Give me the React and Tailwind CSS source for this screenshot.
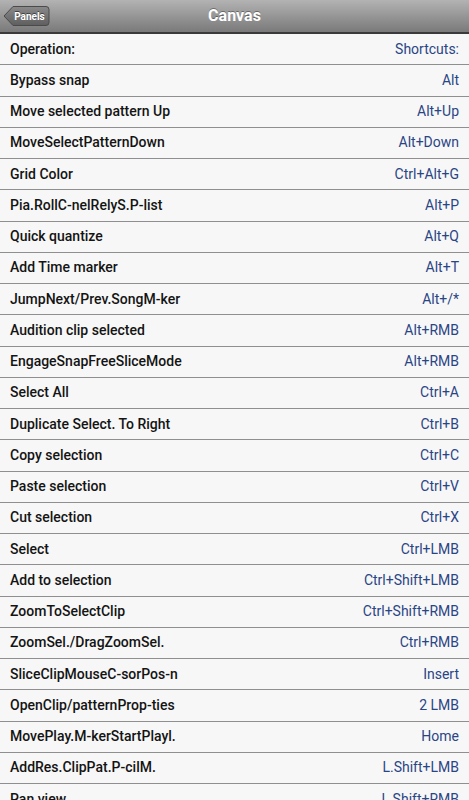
import React from 'react';

const rows = [
  ['Operation:', 'Shortcuts:'],
  ['Bypass snap', 'Alt'],
  ['Move selected pattern Up', 'Alt+Up'],
  ['MoveSelectPatternDown', 'Alt+Down'],
  ['Grid Color', 'Ctrl+Alt+G'],
  ['Pia.RollC-nelRelyS.P-list', 'Alt+P'],
  ['Quick quantize', 'Alt+Q'],
  ['Add Time marker', 'Alt+T'],
  ['JumpNext/Prev.SongM-ker', 'Alt+/*'],
  ['Audition clip selected', 'Alt+RMB'],
  ['EngageSnapFreeSliceMode', 'Alt+RMB'],
  ['Select All', 'Ctrl+A'],
  ['Duplicate Select. To Right', 'Ctrl+B'],
  ['Copy selection', 'Ctrl+C'],
  ['Paste selection', 'Ctrl+V'],
  ['Cut selection', 'Ctrl+X'],
  ['Select', 'Ctrl+LMB'],
  ['Add to selection', 'Ctrl+Shift+LMB'],
  ['ZoomToSelectClip', 'Ctrl+Shift+RMB'],
  ['ZoomSel./DragZoomSel.', 'Ctrl+RMB'],
  ['SliceClipMouseC-sorPos-n', 'Insert'],
  ['OpenClip/patternProp-ties', '2 LMB'],
  ['MovePlay.M-kerStartPlayl.', 'Home'],
  ['AddRes.ClipPat.P-cilM.', 'L.Shift+LMB'],
  ['Pan view', 'L.Shift+RMB'],
];

const BackButton = () => (
  <div className="relative h-[22px] w-[47px]">
    <svg className="absolute inset-0" width="47" height="22" viewBox="0 0 47 22">
      <defs>
        <linearGradient id="bb" x1="0" y1="0" x2="0" y2="1">
          <stop offset="0" stopColor="#8a8a8a" />
          <stop offset="1" stopColor="#5e5e5e" />
        </linearGradient>
      </defs>
      <path
        d="M1 11 L10 1.5 H43 Q46 1.5 46 4.5 V17.5 Q46 20.5 43 20.5 H10 Z"
        fill="url(#bb)"
        stroke="#4a4a4a"
        strokeWidth="1"
      />
    </svg>
    <span className="absolute inset-0 flex items-center justify-center pl-[6px] text-[10px] font-bold text-white [text-shadow:0_-1px_0_rgba(0,0,0,0.5)]">
      Panels
    </span>
  </div>
);

export default function App() {
  return (
    <div className="w-[469px] h-[800px] overflow-hidden bg-[#f7f7f7] font-['Roboto','Liberation_Sans',sans-serif]">
      {/* Title bar */}
      <div className="relative flex h-[34px] items-center justify-center border-b-2 border-[#3a3a3a] bg-gradient-to-b from-[#b3b3b3] to-[#7a7a7a]">
        <div className="absolute left-[3px] top-[5px]">
          <BackButton />
        </div>
        <span className="text-[16px] font-bold text-white [text-shadow:0_-1px_0_rgba(0,0,0,0.35)]">
          Canvas
        </span>
      </div>

      {/* Shortcut rows */}
      <div className="flex flex-col">
        {rows.map(([op, key]) => (
          <div
            key={op}
            className="flex h-[31.25px] shrink-0 items-center justify-between border-b border-[#8f8f8f] px-[10px]"
          >
            <span className="text-[14px] font-medium text-[#141414]">{op}</span>
            <span className="text-[14px] text-[#2a4585]">{key}</span>
          </div>
        ))}
      </div>
    </div>
  );
}
